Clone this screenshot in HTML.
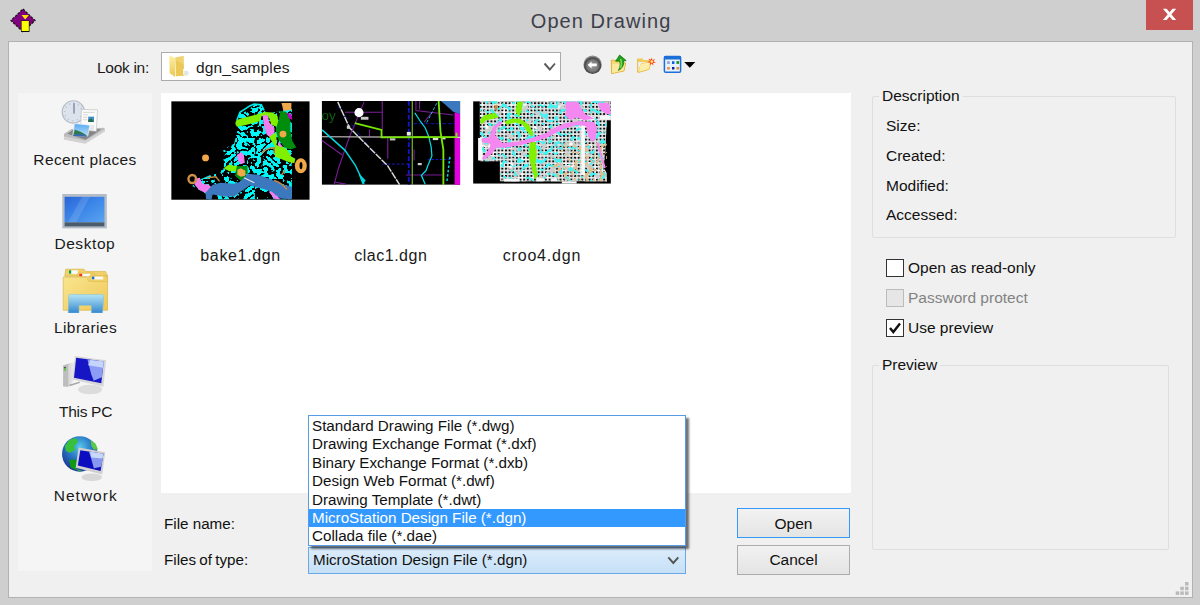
<!DOCTYPE html>
<html><head><meta charset="utf-8"><title>Open Drawing</title>
<style>
html,body{margin:0;padding:0;}
body{width:1200px;height:605px;overflow:hidden;background:#cfcfcf;position:relative;font-family:"Liberation Sans",sans-serif;color:#111;}
.abs{position:absolute;}
.t{position:absolute;white-space:nowrap;line-height:1;}
#client{left:8px;top:41px;width:1185px;height:557px;background:#f0f0f0;border:1px solid #b2b2b2;box-sizing:border-box;}
#title{left:530.8px;top:10.8px;font-size:20px;letter-spacing:1.06px;color:#3c404a;}
#close{left:1146px;top:0;width:47px;height:30px;background:#c75050;}
#places{left:18px;top:93px;width:134px;height:478px;background:#f5f5f5;}
#list{left:161px;top:93px;width:690px;height:400px;background:#fff;}
.pl{font-size:16px;color:#1a1a1a;}
.lbl{font-size:15.5px;color:#111;}
.combo{box-sizing:border-box;border:1px solid #ababab;background:#fff;}
.grp{box-sizing:border-box;border:1px solid #dedede;border-radius:2px;}
.grpl{background:#f0f0f0;padding:0 3px;font-size:15.5px;}
.cb{box-sizing:border-box;width:18px;height:18px;border:1px solid #333;background:#fff;}
.btn{box-sizing:border-box;width:113px;height:30px;border:1px solid #acacac;background:linear-gradient(#f2f2f2,#e4e4e4);text-align:center;font-size:15.5px;}
#dd{left:308px;top:415px;width:378px;height:131px;box-sizing:border-box;border:1px solid #569de5;background:#fff;box-shadow:2.5px 2.5px 2px rgba(50,55,65,.7);}
.it{position:absolute;left:0;width:376px;height:18.4px;font-size:15.2px;line-height:18.4px;margin-top:1px;padding-left:3px;box-sizing:border-box;white-space:nowrap;}
</style></head><body>

<!-- title bar -->
<svg class="abs" style="left:9px;top:7px" width="30" height="28" viewBox="0 0 30 28">
  <polygon points="14,2 26,13.5 14,25 2,13.5" fill="#800080" stroke="#111" stroke-width="1.2" stroke-dasharray="2.5 1.2"/>
  <polygon points="12.5,8 20,8 16.2,12.5" fill="#ffe000"/>
  <rect x="12" y="13.5" width="8.5" height="11.5" fill="#111"/>
  <rect x="12.6" y="14" width="7.2" height="10" fill="#ffff00"/>
</svg>
<div id="title" class="t">Open Drawing</div>
<div id="close" class="abs"><svg width="47" height="30" viewBox="0 0 47 30"><path d="M16.9 8.8 L20.6 8.8 L30.2 20 L26.5 20 Z M26.5 8.8 L30.2 8.8 L20.6 20 L16.9 20 Z" fill="#fff"/></svg></div>

<div id="client" class="abs"></div>

<!-- look in row -->
<div class="t pl" style="left:97px;top:60px;font-size:15.5px;letter-spacing:-.3px">Look in:</div>
<div class="abs combo" style="left:161px;top:52px;width:400px;height:29px"></div>
<div class="t pl" style="left:196px;top:60px;font-size:15.5px;letter-spacing:.12px">dgn_samples</div>

<div id="places" class="abs"></div>
<div id="list" class="abs"></div>



<!-- thumbnail 1: bake1 -->
<svg class="abs" style="left:165px;top:95px" width="150" height="110" viewBox="0 0 825 605">
 <defs>
  <filter id="cn" x="0" y="0" width="100%" height="100%" filterUnits="objectBoundingBox">
   <feTurbulence type="turbulence" baseFrequency="0.028 0.03" numOctaves="2" seed="7" result="n"/>
   <feColorMatrix in="n" type="matrix" values="0 0 0 0 0  0 0 0 0 0.93  0 0 0 0 0.93  22 0 0 0 -4.8" result="c"/>
   <feComposite in="c" in2="SourceGraphic" operator="in"/>
  </filter>
  <filter id="bl" x="-5%" y="-5%" width="110%" height="110%"><feGaussianBlur stdDeviation="4.2"/></filter>
 </defs>
 <g filter="url(#bl)">
 <rect x="35" y="35" width="760" height="541" fill="#000"/>
 <path d="M395 140 L412 95 L466 60 L490 50 L530 54 L545 85 L560 100 L640 90 L698 60 L698 574 L240 574 L228 545 L150 500 L180 470 L262 435 L322 410 L318 300 L380 268 L402 182 Z" fill="#fff" filter="url(#cn)"/>
 <path d="M395 140 L412 95 L466 60 L490 50 L530 54 L545 85" stroke="#00e8e8" stroke-width="9" fill="none"/>
 <!-- lime -->
 <path d="M390 142 L412 131 L510 106 L548 93 L592 96 L619 115 L624 158 L613 175 L586 164 L570 120 L532 115 L521 145 L439 166 L395 175 L387 158 Z" fill="#80f000"/>
 <path d="M570 224 L613 207 L613 278 L635 275 L679 308 L690 335 L717 351 L711 376 L679 368 L635 351 L605 340 L602 278 L581 245 Z" fill="#80f000"/>
 <path d="M322 403 L349 384 L401 392 L401 419 L354 419 Z" fill="#80f000"/>
 <!-- dark green -->
 <path d="M635 87 L668 93 L690 142 L690 196 L700 251 L722 289 L690 300 L657 289 L624 245 L608 191 L624 142 Z" fill="#008c10"/>
 <path d="M395 392 L453 389 L455 433 L439 438 L453 482 L434 485 L385 444 Z" fill="#008c10"/>
 <!-- pink -->
 <path d="M537 112 L564 112 L575 153 L602 180 L602 207 L575 229 L559 218 L548 180 L540 147 Z" fill="#f07cf0"/>
 <path d="M395 330 L420 313 L434 330 L439 373 L417 381 L401 362 Z" fill="#f07cf0"/>
 <path d="M163 460 L191 455 L207 488 L240 493 L267 515 L262 531 L218 537 L185 520 L163 493 Z" fill="#f07cf0"/>
 <path d="M570 531 L592 531 L635 574 L603 574 Z M624 256 L646 283 L635 289 L621 273 Z" fill="#f07cf0"/>
 <!-- blue -->
 <path d="M262 493 L305 482 L381 488 L412 477 L455 433 L510 438 L575 460 L635 488 L698 504 L698 574 L635 569 L586 531 L537 515 L466 498 L417 531 L381 558 L327 558 L262 547 L256 574 L226 574 L223 537 Z" fill="#3b78bd"/>
 <path d="M434 455 L491 482" stroke="#e8e8e8" stroke-width="6"/>
 <!-- orange -->
 <path d="M641 44 L695 44 L695 82 L651 87 Z" fill="#f0a848"/>
 <circle cx="649" cy="215" r="19" fill="#f0a848"/><circle cx="223" cy="346" r="19" fill="#f0a848"/>
 <path d="M398 411 L417 403 L442 417 L442 444 L417 449 L398 438 Z" fill="#f0a848"/>
 <ellipse cx="747" cy="389" rx="33" ry="41" fill="#f0a848"/><ellipse cx="748" cy="388" rx="8" ry="20" fill="#000"/>
 <ellipse cx="150" cy="462" rx="21" ry="22" fill="none" stroke="#cc9248" stroke-width="13"/>
 <path d="M530 320 q30 -30 70 -30 l0 30 M230 455 l50 -5 l20 25 M600 470 q40 10 70 50 M640 440 l20 -25" stroke="#c08848" stroke-width="8" fill="none"/>
 <path d="M668 98 L695 104 L700 136 L684 131 Z" fill="#c800c8"/>
 </g>
</svg>

<!-- thumbnail 2: clac1 -->
<svg class="abs" style="left:315px;top:95px" width="150" height="110" viewBox="0 0 825 605">
 <g filter="url(#bl)">
 <rect x="38" y="33" width="760" height="460" fill="#000"/>
 <text x="36" y="139" font-family="Liberation Sans, sans-serif" font-size="74" fill="#0c5e0c">oy</text>
 <path d="M692 33 L798 33 L798 106 L760 92 L722 58 Z" fill="#3b78bd"/>
 <path d="M768 95 L798 106 L798 493 L768 493 Z" fill="#e000e0"/>
 <!-- purple -->
 <g stroke="#7c1c98" stroke-width="6" fill="none">
  <path d="M270 38 L190 230 L130 400 L105 493"/><path d="M370 33 L370 190"/><path d="M400 238 L400 350"/><path d="M38 250 L150 330"/>
  <path d="M500 440 L700 440"/><path d="M165 95 L370 95"/><path d="M555 33 L555 85 L760 110"/><path d="M575 33 L575 80"/><path d="M300 190 L300 230"/><path d="M110 480 L170 490"/>
  <path d="M640 100 L600 150"/><path d="M545 300 L545 360"/>
 </g>
 <!-- blue dashed -->
 <g stroke="#1414c0" fill="none">
  <path d="M516 33 L516 493" stroke-width="11" stroke-dasharray="26 12"/>
  <path d="M540 158 L770 158" stroke-width="5" stroke-dasharray="22 10"/>
  <path d="M370 380 L520 380" stroke-width="5" stroke-dasharray="18 8"/>
  <path d="M620 355 L750 355" stroke-width="6" stroke-dasharray="14 8"/>
  <path d="M125 60 L330 330" stroke-width="4" stroke-dasharray="30 30"/>
 </g>
 <!-- white/gray -->
 <path d="M38 230 L798 233" stroke="#d8d0d0" stroke-width="6"/>
 <path d="M125 38 L190 180 L300 290 L400 390 L465 493" stroke="#d8d8d8" stroke-width="8" fill="none" stroke-dasharray="40 5"/>
 <circle cx="242" cy="97" r="25" fill="#fff"/>
 <rect x="252" y="120" width="42" height="16" fill="#c8c8c8"/><rect x="505" y="203" width="22" height="20" fill="#e8e8e8"/>
 <rect x="412" y="238" width="30" height="12" fill="#c0c0c0"/><rect x="648" y="236" width="30" height="12" fill="#e0e0e0"/><rect x="700" y="232" width="18" height="12" fill="#e0e0e0"/>
 <rect x="565" y="374" width="22" height="12" fill="#d0d0d0"/><rect x="175" y="168" width="18" height="18" fill="#d0d0d0"/>
 <!-- cyan -->
 <g stroke="#00d8e0" fill="none">
  <path d="M39 192 L164 303 L221 385 L270 489" stroke-width="8"/>
  <path d="M245 440 L275 470 L262 485 Z" fill="#00d8e0" stroke-width="6"/>
  <path d="M549 98 L581 147 L606 180 L626 229 L639 286 L643 335 L622 385 L610 417 L585 442 L606 491" stroke-width="7"/>
  <path d="M670 45 L610 160" stroke-width="5" stroke-dasharray="16 10"/>
  <path d="M742 340 L725 480" stroke-width="8" stroke-dasharray="14 10"/>
 </g>
 <!-- lime -->
 <g stroke="#78e800" fill="none">
  <path d="M219 155 L366 192 L366 233 L778 231 L778 207" stroke-width="10"/>
  <path d="M535 33 L535 493" stroke-width="6" stroke="#80c820"/>
  <path d="M680 33 L690 200 L706 300 L706 493" stroke-width="10"/>
 </g>
 </g>
</svg>

<!-- thumbnail 3: croo4 -->
<svg class="abs" style="left:465px;top:95px" width="150" height="110" viewBox="0 0 825 605">
 <defs>
  <pattern id="gr" width="20" height="20" patternUnits="userSpaceOnUse">
   <rect x="0" y="0" width="11" height="10" fill="#080808"/><path d="M15.5 0 V20 M0 15 H20" stroke="#f2f2f2" stroke-width="4"/>
  </pattern>
  <filter id="gk" x="0" y="0" width="100%" height="100%">
   <feTurbulence type="fractalNoise" baseFrequency="0.02 0.024" numOctaves="2" seed="11" result="n"/>
   <feColorMatrix in="n" type="matrix" values="0 0 0 0 0  0 0 0 0 0  0 0 0 0 0  9 0 0 0 -2.9" result="m"/>
   <feComposite in="SourceGraphic" in2="m" operator="in"/>
  </filter>
  <filter id="gc" x="0" y="0" width="100%" height="100%">
   <feTurbulence type="fractalNoise" baseFrequency="0.035 0.04" numOctaves="2" seed="23" result="n"/>
   <feColorMatrix in="n" type="matrix" values="0 0 0 0 0.05  0 0 0 0 0.9  0 0 0 0 0.9  0 12 0 0 -6.7" result="c"/>
   <feComposite in="c" in2="SourceGraphic" operator="in"/>
  </filter>
  <filter id="gb" x="0" y="0" width="100%" height="100%">
   <feTurbulence type="fractalNoise" baseFrequency="0.05 0.045" numOctaves="2" seed="41" result="n"/>
   <feColorMatrix in="n" type="matrix" values="0 0 0 0 0.75  0 0 0 0 0.52  0 0 0 0 0.26  0 0 13 0 -7.2" result="c"/>
   <feComposite in="c" in2="SourceGraphic" operator="in"/>
  </filter>
  <filter id="gw" x="0" y="0" width="100%" height="100%">
   <feTurbulence type="fractalNoise" baseFrequency="0.03 0.03" numOctaves="1" seed="63" result="n"/>
   <feColorMatrix in="n" type="matrix" values="0 0 0 0 0.97  0 0 0 0 0.97  0 0 0 0 0.97  11 0 0 0 -6.4" result="c"/>
   <feComposite in="c" in2="SourceGraphic" operator="in"/>
  </filter>
 </defs>
 <g filter="url(#bl)">
 <rect x="45" y="35" width="757" height="452" fill="#000"/>
 <path d="M82 35 L802 35 L802 139 L780 139 L772 300 L762 400 L780 430 L780 475 L192 475 L192 364 L82 364 Z" fill="#cecece"/>
 <path d="M82 35 L802 35 L802 139 L780 139 L772 300 L762 400 L780 430 L780 475 L192 475 L192 364 L82 364 Z" fill="#fff" filter="url(#gw)"/>
 <path d="M82 35 L802 35 L802 139 L780 139 L772 300 L762 400 L780 430 L780 475 L192 475 L192 364 L82 364 Z" fill="url(#gr)" filter="url(#gk)"/>
 <path d="M82 35 L802 35 L802 139 L780 139 L772 300 L762 400 L780 430 L780 475 L192 475 L192 364 L82 364 Z" fill="#fff" filter="url(#gc)"/>
 <path d="M548 262 L780 262 L780 475 L520 475 L480 400 Z M150 45 L200 45 L200 95 L150 95 Z" fill="#fff" filter="url(#gb)"/>
 <path d="M639 156 L659 156 L659 442 L639 442 Z M72 237 L94 237 L94 360 L72 360 Z M532 475 L614 475 L614 487 L532 487 Z M655 119 L712 119 L712 139 L655 139 Z M740 115 L802 115 L802 135 L740 135 Z M393 458 L434 458 L434 475 L393 475 Z M475 458 L508 458 L508 475 L475 475 Z M215 460 L300 460 L300 476 L215 476 Z" fill="#f8f8f8"/>
 <path d="M160 57 L180 57 L176 86 L164 82 Z" fill="#c08848"/>
 <!-- pink -->
 <path d="M90 240 L133 232 L153 178 L192 141 L207 152 L174 182 L166 222 L205 264 L286 257 L368 237 L457 205 L467 193 L549 156 L630 143 L712 149 L727 180 L718 244 L698 258 L675 221 L667 170 L614 165 L549 184 L483 217 L457 232 L376 258 L295 278 L221 290 L174 290 L147 324 L100 360 L96 344 L133 295 L141 268 L94 260 Z" fill="#f488f0"/>
 <path d="M553 37 L622 37 L639 74 L663 106 L712 131 L655 139 L614 123 L581 139 L553 115 Z M729 41 L794 45 L802 106 L778 106 L745 82 Z" fill="#f488f0"/>
 <path d="M729 262 L748 330 L769 401" stroke="#f488f0" stroke-width="11" fill="none"/>
 <!-- lime -->
 <path d="M286 37 L319 37 L311 90 L295 123 L278 90 Z M82 139 L106 111 L164 98 L184 123 L156 131 L115 139 L90 164 Z M217 147 L254 131 L303 131 L352 164 L376 213 L368 229 L344 205 L319 164 L278 151 L229 164 Z M356 262 L389 258 L395 327 L387 376 L401 442 L385 466 L368 409 L352 344 Z" fill="#80f000"/>
 </g>
</svg>

<!-- folder icon in combo (viewBox in 17.28x zoom coords of region 160,50) -->
<svg class="abs" style="left:160px;top:50px" width="60" height="35" viewBox="0 0 1037 605">
 <defs><filter id="b2"><feGaussianBlur stdDeviation="7"/></filter>
 <linearGradient id="fy" x1="0" y1="0" x2="0" y2="1"><stop offset="0" stop-color="#fbf0a8"/><stop offset="1" stop-color="#edc850"/></linearGradient></defs>
 <g filter="url(#b2)">
 <ellipse cx="440" cy="400" rx="55" ry="40" fill="#e4e4e4"/>
 <path d="M262 128 L410 100 L418 440 L275 452 Z" fill="#f0d470"/>
 <path d="M160 92 L258 138 L262 465 L168 402 Z" fill="url(#fy)"/>
 <path d="M275 175 L405 250 L412 440 L278 452 Z" fill="#ecc858"/>
 <path d="M398 330 L420 330 L420 420 L400 430 Z" fill="#f8f8f0"/>
 </g>
</svg>

<!-- back button -->
<svg class="abs" style="left:582px;top:54px" width="22" height="22" viewBox="0 0 22 22">
 <defs><radialGradient id="bk" cx=".5" cy=".55" r=".5"><stop offset="0" stop-color="#9a9a9a"/><stop offset=".6" stop-color="#7a7a7a"/><stop offset=".85" stop-color="#454545"/><stop offset="1" stop-color="#8a8a8a"/></radialGradient></defs>
 <circle cx="10.6" cy="10.8" r="9.2" fill="url(#bk)"/>
 <path d="M5.6 10.9 L9.6 7.4 L9.6 9.6 L14.8 9.6 L14.8 12.3 L9.6 12.3 L9.6 14.5 Z" fill="#fff"/>
</svg>

<!-- up one level -->
<svg class="abs" style="left:608px;top:53px" width="22" height="22" viewBox="0 0 22 22">
 <path d="M3.2 7.2 L7.2 7.2 L8.2 8.4 L13 8.4 L13 10 L17.6 10 L16 18 L3.6 20.6 Z" fill="#f4d878" stroke="#e0b030" stroke-width=".9"/>
 <path d="M4.4 11 L16.8 10.4 L15.6 17.6 L4 20 Z" fill="#fae9a0"/>
 <path d="M11.6 2 L18.2 7.6 L15.6 7.8 C16.2 12 14.2 15.6 10.4 17.4 C12.4 14 12.4 11 11.6 8 L7.6 8.2 Z" fill="#1ea01e" stroke="#0c700c" stroke-width=".7"/>
 <path d="M12.6 6 C13.6 9 13.8 12 12.4 15" stroke="#7be04a" stroke-width="1.6" fill="none"/>
</svg>

<!-- new folder -->
<svg class="abs" style="left:635px;top:55px" width="22" height="20" viewBox="0 0 22 20">
 <path d="M2.6 3.6 L7.4 3.2 L8.2 5 L14 5 L14 7 L2.8 7 Z" fill="#f0cc58"/>
 <path d="M2.6 4 L2.6 17 L3.6 17.4 L6 9 L16.6 6.6 L13.8 14.4 L3.6 17.4" fill="#f6dc80" stroke="#e4b83c" stroke-width=".9"/>
 <path d="M5.6 9 L16.4 6.8 L13.6 14 L3.8 16.8 Z" fill="#fbeea8"/>
 <path d="M16.6 2.4 l.9 2.6 2.7 -1 -1.7 2.3 2.4 1.4 -2.8 .3 .3 2.8 -1.8 -2.2 -2 2 .5 -2.8 -2.8 -.5 2.5 -1.3 -1.4 -2.4 2.5 1.2 Z" fill="#ff4a18"/>
 <circle cx="16.8" cy="6.6" r="1.3" fill="#ffe890"/>
</svg>

<!-- view menu -->
<svg class="abs" style="left:663px;top:55px" width="34" height="19" viewBox="0 0 34 19">
 <rect x="1.4" y="1.4" width="16.2" height="15.8" rx="1.3" fill="#e8f2fc" stroke="#1b6fd6" stroke-width="1.5"/>
 <rect x="1" y="1" width="17" height="3.6" rx="1.2" fill="#1b6fd6"/>
 <rect x="4.1" y="6.2" width="2.7" height="2.8" fill="#9aa2dc"/><rect x="9" y="6.2" width="2.4" height="2.8" fill="#1060e0"/><rect x="13.4" y="6.2" width="2.7" height="2.6" fill="#109010"/>
 <rect x="4.1" y="12" width="2.7" height="2.5" fill="#e89040"/><rect x="9" y="12" width="2.4" height="2.5" fill="#102090"/><rect x="13.4" y="12" width="2.7" height="2.5" fill="#e09040"/>
 <path d="M21.2 7 L32.3 7 L26.8 12.8 Z" fill="#000"/>
</svg>

<!-- Recent places icon (12.1x coords, region 55,95) -->
<svg class="abs" style="left:55px;top:95px" width="60" height="50" viewBox="0 0 726 605">
 <defs><filter id="b3"><feGaussianBlur stdDeviation="6"/></filter>
 <linearGradient id="sky" x1="0" y1="0" x2="0" y2="1"><stop offset="0" stop-color="#58a8f0"/><stop offset="1" stop-color="#b8e0f8"/></linearGradient></defs>
 <g filter="url(#b3)">
 <circle cx="222" cy="205" r="135" fill="#dde3ec" stroke="#b4bcc8" stroke-width="14"/><circle cx="222" cy="205" r="105" fill="none" stroke="#a8b4c8" stroke-width="16" stroke-dasharray="10 45"/>
 <path d="M230 100 L230 225" stroke="#506488" stroke-width="12"/>
 <path d="M110 470 L200 410 L600 395 L600 440 L365 585 L108 535 Z" fill="#bcbcbc"/>
 <path d="M150 470 L215 425 L560 415 L370 540 Z" fill="#868686"/>
 <path d="M320 175 L515 180 L500 440 L310 420 Z" fill="#fbfbfb" stroke="#c0c0c0" stroke-width="8"/>
 <path d="M340 210 H480 M340 240 H400 M340 270 H390 M340 300 H390" stroke="#c8c8c8" stroke-width="9"/>
 <rect x="402" y="262" width="70" height="64" fill="#3c8cc8"/><path d="M402 326 L402 300 L440 285 L472 326 Z" fill="#2a6a4a"/>
 <path d="M425 360 L480 365 L470 430 L420 425 Z" fill="#e8e8e8"/>
 <path d="M235 345 L422 365 L396 500 L215 490 Z" fill="url(#sky)" stroke="#f4f4f4" stroke-width="8"/>
 <path d="M222 480 L240 420 C290 430 340 460 392 492 Z" fill="#2e7a48"/>
 <path d="M218 488 L300 470 L392 496 L390 505 L216 496 Z" fill="#3868b8"/>
 <path d="M108 500 L365 555 L600 415 L600 445 L365 590 L108 538 Z" fill="#d2d2d2"/>
 </g>
</svg>

<!-- Desktop icon -->
<svg class="abs" style="left:60px;top:192px" width="50" height="38" viewBox="0 0 50 38">
 <defs><linearGradient id="dk" x1="0" y1="0" x2="1" y2="1"><stop offset="0" stop-color="#2a64d8"/><stop offset=".45" stop-color="#3a84e8"/><stop offset="1" stop-color="#5aa4f0"/></linearGradient></defs>
 <rect x="2.3" y="2" width="44.5" height="34.4" fill="#b4bcc6"/>
 <rect x="4.6" y="4.8" width="39.8" height="25.6" fill="url(#dk)"/>
 <path d="M8 30.4 L22 4.8 L30 4.8 L16 30.4 Z" fill="#ffffff" opacity=".12"/>
 <rect x="4.6" y="30.4" width="39.8" height="4" fill="#4a5c6c"/>
</svg>

<!-- Libraries icon (12.1x coords, region 55,263) -->
<svg class="abs" style="left:55px;top:263px" width="60" height="50" viewBox="0 0 726 605">
 <defs><linearGradient id="lf" x1="0" y1="0" x2="1" y2="1"><stop offset="0" stop-color="#f9e690"/><stop offset="1" stop-color="#efc858"/></linearGradient>
 <linearGradient id="lb" x1="0" y1="0" x2="0" y2="1"><stop offset="0" stop-color="#b4e4f4"/><stop offset="1" stop-color="#3488d0"/></linearGradient></defs>
 <g filter="url(#b3)">
 <path d="M118 160 L130 75 L350 75 L372 102 L612 102 L636 160 Z" fill="#f0d068" stroke="#d8b448" stroke-width="8"/>
 <rect x="165" y="88" width="110" height="44" fill="#fafafa"/><rect x="168" y="88" width="28" height="42" fill="#18a030"/>
 <path d="M262 160 L280 122 L470 122 L488 160 Z" fill="#f0d068" stroke="#d8b448" stroke-width="6"/>
 <rect x="295" y="130" width="130" height="30" fill="#fafafa"/><rect x="293" y="130" width="36" height="30" fill="#f03818"/>
 <path d="M100 170 L385 170 L410 210 L636 150 L636 572 L100 572 Z" fill="url(#lf)" stroke="#d8b448" stroke-width="8"/>
 <path d="M395 200 L420 155 L620 155 L636 200 L636 225 L410 222 Z" fill="#f0d068" stroke="#d8b448" stroke-width="6"/>
 <rect x="448" y="165" width="135" height="34" fill="#fafafa"/><rect x="448" y="165" width="28" height="32" fill="#1868d0"/>
 <path d="M165 390 Q165 382 180 382 L575 382 Q592 382 590 395 L575 605 L440 605 L440 512 L290 512 L290 605 L160 605 Z" fill="url(#lb)" stroke="#78c0d8" stroke-width="6"/>
 </g>
</svg>

<!-- This PC icon (12.1x coords, region 55,350) -->
<svg class="abs" style="left:55px;top:350px" width="60" height="50" viewBox="0 0 726 605">
 <defs><linearGradient id="tw" x1="0" y1="0" x2="1" y2="0"><stop offset="0" stop-color="#c4c4c4"/><stop offset="1" stop-color="#ececec"/></linearGradient></defs>
 <g filter="url(#b3)">
 <ellipse cx="425" cy="478" rx="145" ry="58" fill="#dcdcdc"/>
 <path d="M100 188 L170 160 L240 150 L240 345 L170 445 L100 440 Z" fill="url(#tw)"/>
 <path d="M100 188 L160 170 L160 445 L100 440 Z" fill="#bdbdbd"/>
 <rect x="108" y="205" width="24" height="18" fill="#505050"/><rect x="108" y="225" width="24" height="26" fill="#50d030"/>
 <path d="M170 420 L300 380 L300 400 L180 440 Z" fill="#a8a8a8"/>
 <path d="M240 72 L618 124 L586 444 L213 356 Z" fill="#d6d6d6"/>
 <path d="M256 95 L590 140 L560 402 L230 335 Z" fill="#1414c4"/>
 <path d="M392 114 L590 140 L568 330 L470 372 L440 300 Z" fill="#8c9cf4"/>
 <path d="M430 120 L590 140 L582 215 L400 185 Z" fill="#c4d4fc"/>
 </g>
</svg>

<!-- Network icon (12.1x coords, region 55,432) -->
<svg class="abs" style="left:55px;top:432px" width="60" height="50" viewBox="0 0 726 605">
 <defs><radialGradient id="gl" cx=".5" cy=".3" r=".65"><stop offset="0" stop-color="#58c8e8"/><stop offset=".5" stop-color="#2a78c8"/><stop offset="1" stop-color="#1c3c98"/></radialGradient></defs>
 <g filter="url(#b3)">
 <ellipse cx="445" cy="548" rx="125" ry="46" fill="#d8d8d8"/>
 <circle cx="300" cy="265" r="215" fill="url(#gl)"/>
 <path d="M120 170 L170 100 L250 70 L280 120 L230 170 L250 215 L180 250 L130 230 Z" fill="#38c038"/>
 <path d="M170 340 L250 330 L280 380 L250 460 L190 430 Z" fill="#109818"/>
 <path d="M430 100 L490 140 L520 210 L470 215 L440 170 Z" fill="#58c848"/>
 <path d="M230 440 L330 470 L300 480 Z" fill="#30b060"/>
 <path d="M285 188 L608 244 L572 514 L250 432 Z" fill="#d0d0d0"/>
 <path d="M306 220 L586 262 L552 472 L276 406 Z" fill="#1010c0"/>
 <path d="M410 236 L586 262 L560 420 L470 440 L440 330 Z" fill="#8898f0"/>
 <path d="M425 240 L584 264 L576 320 L440 310 Z" fill="#c8d8fc"/>
 </g>
</svg>

<!-- combo chevron (look in) -->
<svg class="abs" style="left:543px;top:62px" width="14" height="10" viewBox="0 0 14 10"><path d="M1.5 1.5 L6.8 7.5 L12 1.5" stroke="#5a5a5a" stroke-width="1.9" fill="none"/></svg>

<!-- file labels -->
<div class="t pl" style="left:200.3px;top:247.6px;letter-spacing:.65px">bake1.dgn</div>
<div class="t pl" style="left:354.3px;top:247.6px;letter-spacing:.5px">clac1.dgn</div>
<div class="t pl" style="left:502.8px;top:247.6px;letter-spacing:.8px">croo4.dgn</div>

<!-- places labels -->
<div class="t pl" style="left:33.3px;top:152px;font-size:15.5px;letter-spacing:.4px">Recent places</div>
<div class="t pl" style="left:54.4px;top:236px;font-size:15.5px;letter-spacing:.58px">Desktop</div>
<div class="t pl" style="left:54px;top:320px;font-size:15.5px;letter-spacing:.4px">Libraries</div>
<div class="t pl" style="left:59px;top:404px;font-size:15.5px;letter-spacing:-.3px">This PC</div>
<div class="t pl" style="left:53.8px;top:488px;font-size:15.5px;letter-spacing:1px">Network</div>

<!-- description group -->
<div class="abs grp" style="left:872px;top:96px;width:304px;height:142px"></div>
<div class="t grpl" style="left:879px;top:88px">Description</div>
<div class="t lbl" style="left:886px;top:118px">Size:</div>
<div class="t lbl" style="left:886px;top:148px">Created:</div>
<div class="t lbl" style="left:886px;top:178px">Modified:</div>
<div class="t lbl" style="left:886px;top:207px">Accessed:</div>

<!-- checkboxes -->
<div class="abs cb" style="left:886px;top:259px"></div>
<div class="t lbl" style="left:908px;top:260px">Open as read-only</div>
<div class="abs cb" style="left:886px;top:289px;border-color:#bcbcbc;background:#e6e6e6"></div>
<div class="t lbl" style="left:908px;top:290px;color:#838383">Password protect</div>
<div class="abs cb" style="left:886px;top:319px"><svg width="16" height="16" viewBox="0 0 16 16" style="display:block"><path d="M3 8 L6.3 12 L13 3.5" stroke="#111" stroke-width="2.4" fill="none"/></svg></div>
<div class="t lbl" style="left:908px;top:320px">Use preview</div>

<!-- preview group -->
<div class="abs grp" style="left:872px;top:365px;width:297px;height:185px"></div>
<div class="t grpl" style="left:879px;top:357px">Preview</div>

<!-- bottom -->
<div class="t lbl" style="left:164px;top:516px;font-size:15.2px">File name:</div>
<div class="t lbl" style="left:164px;top:552px;font-size:15.2px;word-spacing:-1px">Files of type:</div>
<div class="abs combo" style="left:308px;top:547px;width:378px;height:27px;border-color:#6aa9e8;background:linear-gradient(#dcecfb,#c6e0f7)"></div>
<div class="t lbl" style="left:313px;top:552px;font-size:15.2px">MicroStation Design File (*.dgn)</div>
<svg class="abs" style="left:667px;top:556px" width="13" height="9" viewBox="0 0 13 9"><path d="M1.3 1.3 L6.3 7 L11.3 1.3" stroke="#555" stroke-width="1.9" fill="none"/></svg>

<div class="abs btn" style="left:737px;top:508px;border-color:#3399ff"><div class="t" style="left:0;width:111px;top:7px">Open</div></div>
<div class="abs btn" style="left:737px;top:545px"><div class="t" style="left:0;width:111px;top:6px">Cancel</div></div>

<!-- dropdown list -->
<div id="dd" class="abs">
 <div class="it" style="top:0px">Standard Drawing File (*.dwg)</div>
 <div class="it" style="top:18.4px">Drawing Exchange Format (*.dxf)</div>
 <div class="it" style="top:36.8px">Binary Exchange Format (*.dxb)</div>
 <div class="it" style="top:55.2px">Design Web Format (*.dwf)</div>
 <div class="it" style="top:73.6px">Drawing Template (*.dwt)</div>
 <div class="it" style="top:92px;background:#3399ff;color:#fff">MicroStation Design File (*.dgn)</div>
 <div class="it" style="top:110.4px">Collada file (*.dae)</div>
</div>

<!-- size grip -->
<svg class="abs" style="left:1175px;top:581px" width="15" height="15" viewBox="0 0 15 15" fill="#b9b9b9">
 <rect x="10" y="1" width="3.5" height="3.5"/><rect x="5.3" y="5.7" width="3.5" height="3.5"/><rect x="10" y="5.7" width="3.5" height="3.5"/>
 <rect x="0.7" y="10.4" width="3.5" height="3.5"/><rect x="5.3" y="10.4" width="3.5" height="3.5"/><rect x="10" y="10.4" width="3.5" height="3.5"/>
</svg>

</body></html>
